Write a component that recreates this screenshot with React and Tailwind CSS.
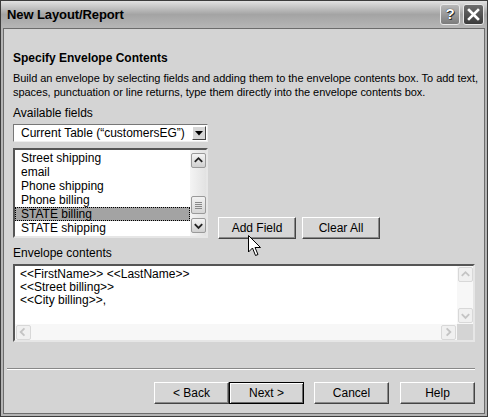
import React from "react";

function ArrowBox({ dir, faded }) {
  const d = dir === "up" ? "M3 8 L7 4 L11 8" : dir === "down" ? "M3 5 L7 9 L11 5" : dir === "left" ? "M8 3 L4 7 L8 11" : "M5 3 L9 7 L5 11";
  return (
    <div
      className={`w-[15px] h-[15px] flex items-center justify-center rounded-[2px] border ${
        faded ? "border-[#d8d8d8] bg-[#f0f0f0]" : "border-[#9a9a9a] bg-gradient-to-b from-[#f4f4f4] to-[#d0d0d0]"
      }`}
    >
      <svg width="14" height="14" viewBox="0 0 14 14">
        <path d={d} fill="none" stroke={faded ? "#c4c4c4" : "#222"} strokeWidth="2" />
      </svg>
    </div>
  );
}

function Btn({ children, isDefault }) {
  return (
    <div
      className={
        isDefault
          ? "w-[75px] h-[22px] flex items-center justify-center bg-[#d6d6d6] text-[12px] text-black border border-black shadow-[inset_1px_1px_0_#ffffff,inset_-1px_-1px_0_#6a6a6a]"
          : "w-[75px] h-[22px] flex items-center justify-center bg-[#d6d6d6] text-[12px] text-black border border-t-white border-l-white border-r-[#444] border-b-[#444] shadow-[inset_-1px_-1px_0_#8a8a8a]"
      }
    >
      {children}
    </div>
  );
}

export default function App() {
  const fields = ["Street shipping", "email", "Phone shipping", "Phone billing", "STATE billing", "STATE shipping"];

  return (
    <div className="relative w-[488px] h-[417px] bg-[#b4b4b4] border border-[#3c3c3c] flex flex-col font-['Liberation_Sans',Arial,sans-serif] text-black">
      {/* Title bar */}
      <div className="h-[27px] flex items-center pl-[6px] pr-[3px] bg-gradient-to-b from-[#e2e2e2] via-[#a4a4a4] to-[#b6b6b6]">
        <span className="text-[13px] font-bold tracking-[-0.1px]">New Layout/Report</span>
        <div className="ml-auto flex gap-[3px]">
          <div className="w-[20px] h-[21px] rounded-[3px] border border-[#e8e8e8] bg-gradient-to-b from-[#b8b8b8] to-[#7c7c7c] flex items-center justify-center text-white font-bold text-[15px] [text-shadow:0_0_1px_#000,1px_1px_0_#333]">
            ?
          </div>
          <div className="w-[21px] h-[21px] rounded-[3px] border border-[#e8e8e8] bg-gradient-to-b from-[#6e6e6e] to-[#3c3c3c] flex items-center justify-center">
            <svg width="13" height="13" viewBox="0 0 13 13">
              <path d="M2 2 L11 11 M11 2 L2 11" stroke="#fff" strokeWidth="2.6" strokeLinecap="square" />
            </svg>
          </div>
        </div>
      </div>

      {/* Body */}
      <div className="flex-1 mx-[2px] mb-[2px] bg-[#d4d4d4] border border-[#6c6c6c] pl-[9px] pr-[8px] pt-[22px] flex flex-col text-[12px]">
        <div className="font-bold leading-[14px]">Specify Envelope Contents</div>
        <p className="mt-[6px] leading-[14px] text-[11px] whitespace-nowrap tracking-[-0.04px]">
          Build an envelope by selecting fields and adding them to the envelope contents box. To add text,
          <br />
          spaces, punctuation or line returns, type them directly into the envelope contents box.
        </p>
        <div className="mt-[7px] leading-[14px]">Available fields</div>

        {/* Dropdown */}
        <div className="mt-[4px] w-[195px] h-[18px] bg-white border border-t-[#777] border-l-[#777] border-b-[#eee] border-r-[#eee] flex items-center pl-[7px] pr-[1px]">
          <span className="leading-[14px]">Current Table (“customersEG”)</span>
          <div className="ml-auto w-[14px] h-[14px] border border-t-white border-l-white border-r-[#444] border-b-[#444] bg-[#d6d6d6] flex items-center justify-center">
            <svg width="8" height="5" viewBox="0 0 8 5">
              <path d="M0 0 H8 L4 4.5 Z" fill="#000" />
            </svg>
          </div>
        </div>

        {/* List + buttons */}
        <div className="mt-[6px] flex items-end gap-[10px]">
          <div className="w-[195px] h-[90px] bg-white border-2 border-t-[#555] border-l-[#555] border-b-[#e6e6e6] border-r-[#e6e6e6] flex">
            <div className="flex-1 pt-[1px]">
              {fields.map((f) =>
                f === "STATE billing" ? (
                  <div key={f} className="h-[14px] leading-[12px] pl-[5px] bg-[#a3a3a3] border border-dotted border-black">
                    {f}
                  </div>
                ) : (
                  <div key={f} className="h-[14px] leading-[14px] pl-[6px]">
                    {f}
                  </div>
                )
              )}
            </div>
            <div className="w-[16px] bg-gradient-to-r from-[#f4f4f4] to-[#e2e2e2] flex flex-col items-center py-[3px]">
              <ArrowBox dir="up" />
              <div className="flex-1" />
              <div className="w-[15px] h-[18px] rounded-[2px] border border-[#9a9a9a] bg-gradient-to-b from-[#f2f2f2] to-[#d6d6d6] flex flex-col items-center justify-center gap-[1px]">
                <div className="w-[7px] h-px bg-[#888]" />
                <div className="w-[7px] h-px bg-[#888]" />
                <div className="w-[7px] h-px bg-[#888]" />
                <div className="w-[7px] h-px bg-[#888]" />
              </div>
              <div className="h-[4px]" />
              <ArrowBox dir="down" />
            </div>
          </div>
          <div className="flex gap-[6px] mb-[-1px]">
            <div className="w-[78px] h-[22px] flex items-center justify-center bg-[#d6d6d6] border border-t-white border-l-white border-r-[#444] border-b-[#444] shadow-[inset_-1px_-1px_0_#8a8a8a]">
              Add Field
            </div>
            <div className="w-[78px] h-[22px] flex items-center justify-center bg-[#d6d6d6] border border-t-white border-l-white border-r-[#444] border-b-[#444] shadow-[inset_-1px_-1px_0_#8a8a8a]">
              Clear All
            </div>
          </div>
        </div>

        <div className="mt-[8px] leading-[14px]">Envelope contents</div>

        {/* Envelope contents box */}
        <div className="mt-[4px] w-[462px] h-[78px] bg-white border-2 border-t-[#555] border-l-[#555] border-b-[#e6e6e6] border-r-[#e6e6e6] flex flex-col">
          <div className="flex-1 flex">
            <div className="flex-1 pl-[5px] pt-[2px] leading-[13px]">
              <div>&lt;&lt;FirstName&gt;&gt; &lt;&lt;LastName&gt;&gt;</div>
              <div>&lt;&lt;Street billing&gt;&gt;</div>
              <div>&lt;&lt;City billing&gt;&gt;,</div>
            </div>
            <div className="w-[16px] bg-[#f7f7f7] flex flex-col items-center pt-[1px] pb-[1px] justify-between">
              <ArrowBox dir="up" faded />
              <ArrowBox dir="down" faded />
            </div>
          </div>
          <div className="h-[16px] flex bg-[#f7f7f7]">
            <div className="flex-1 flex items-center justify-between px-[1px]">
              <ArrowBox dir="left" faded />
              <ArrowBox dir="right" faded />
            </div>
            <div className="w-[16px] bg-[#d4d4d4]" />
          </div>
        </div>

        {/* Separator */}
        <div className="mt-[26px] ml-[-6px] mr-[1px] h-[2px] border-t border-t-[#888] border-b border-b-white" />

        {/* Wizard buttons */}
        <div className="mt-[12px] mr-[1px] flex justify-end">
          <Btn>&lt; Back</Btn>
          <Btn isDefault>Next &gt;</Btn>
          <div className="w-[10px]" />
          <Btn>Cancel</Btn>
          <div className="w-[11px]" />
          <Btn>Help</Btn>
        </div>
      </div>

      {/* Mouse pointer */}
      <svg className="absolute left-[247px] top-[234px]" width="14" height="22" viewBox="0 0 14 22">
        <path d="M0.5 0.5 V17 L4.5 13 L7.5 20.5 L10 19.5 L7 12.5 H12.5 Z" fill="#fff" stroke="#000" strokeWidth="1" />
      </svg>
    </div>
  );
}
